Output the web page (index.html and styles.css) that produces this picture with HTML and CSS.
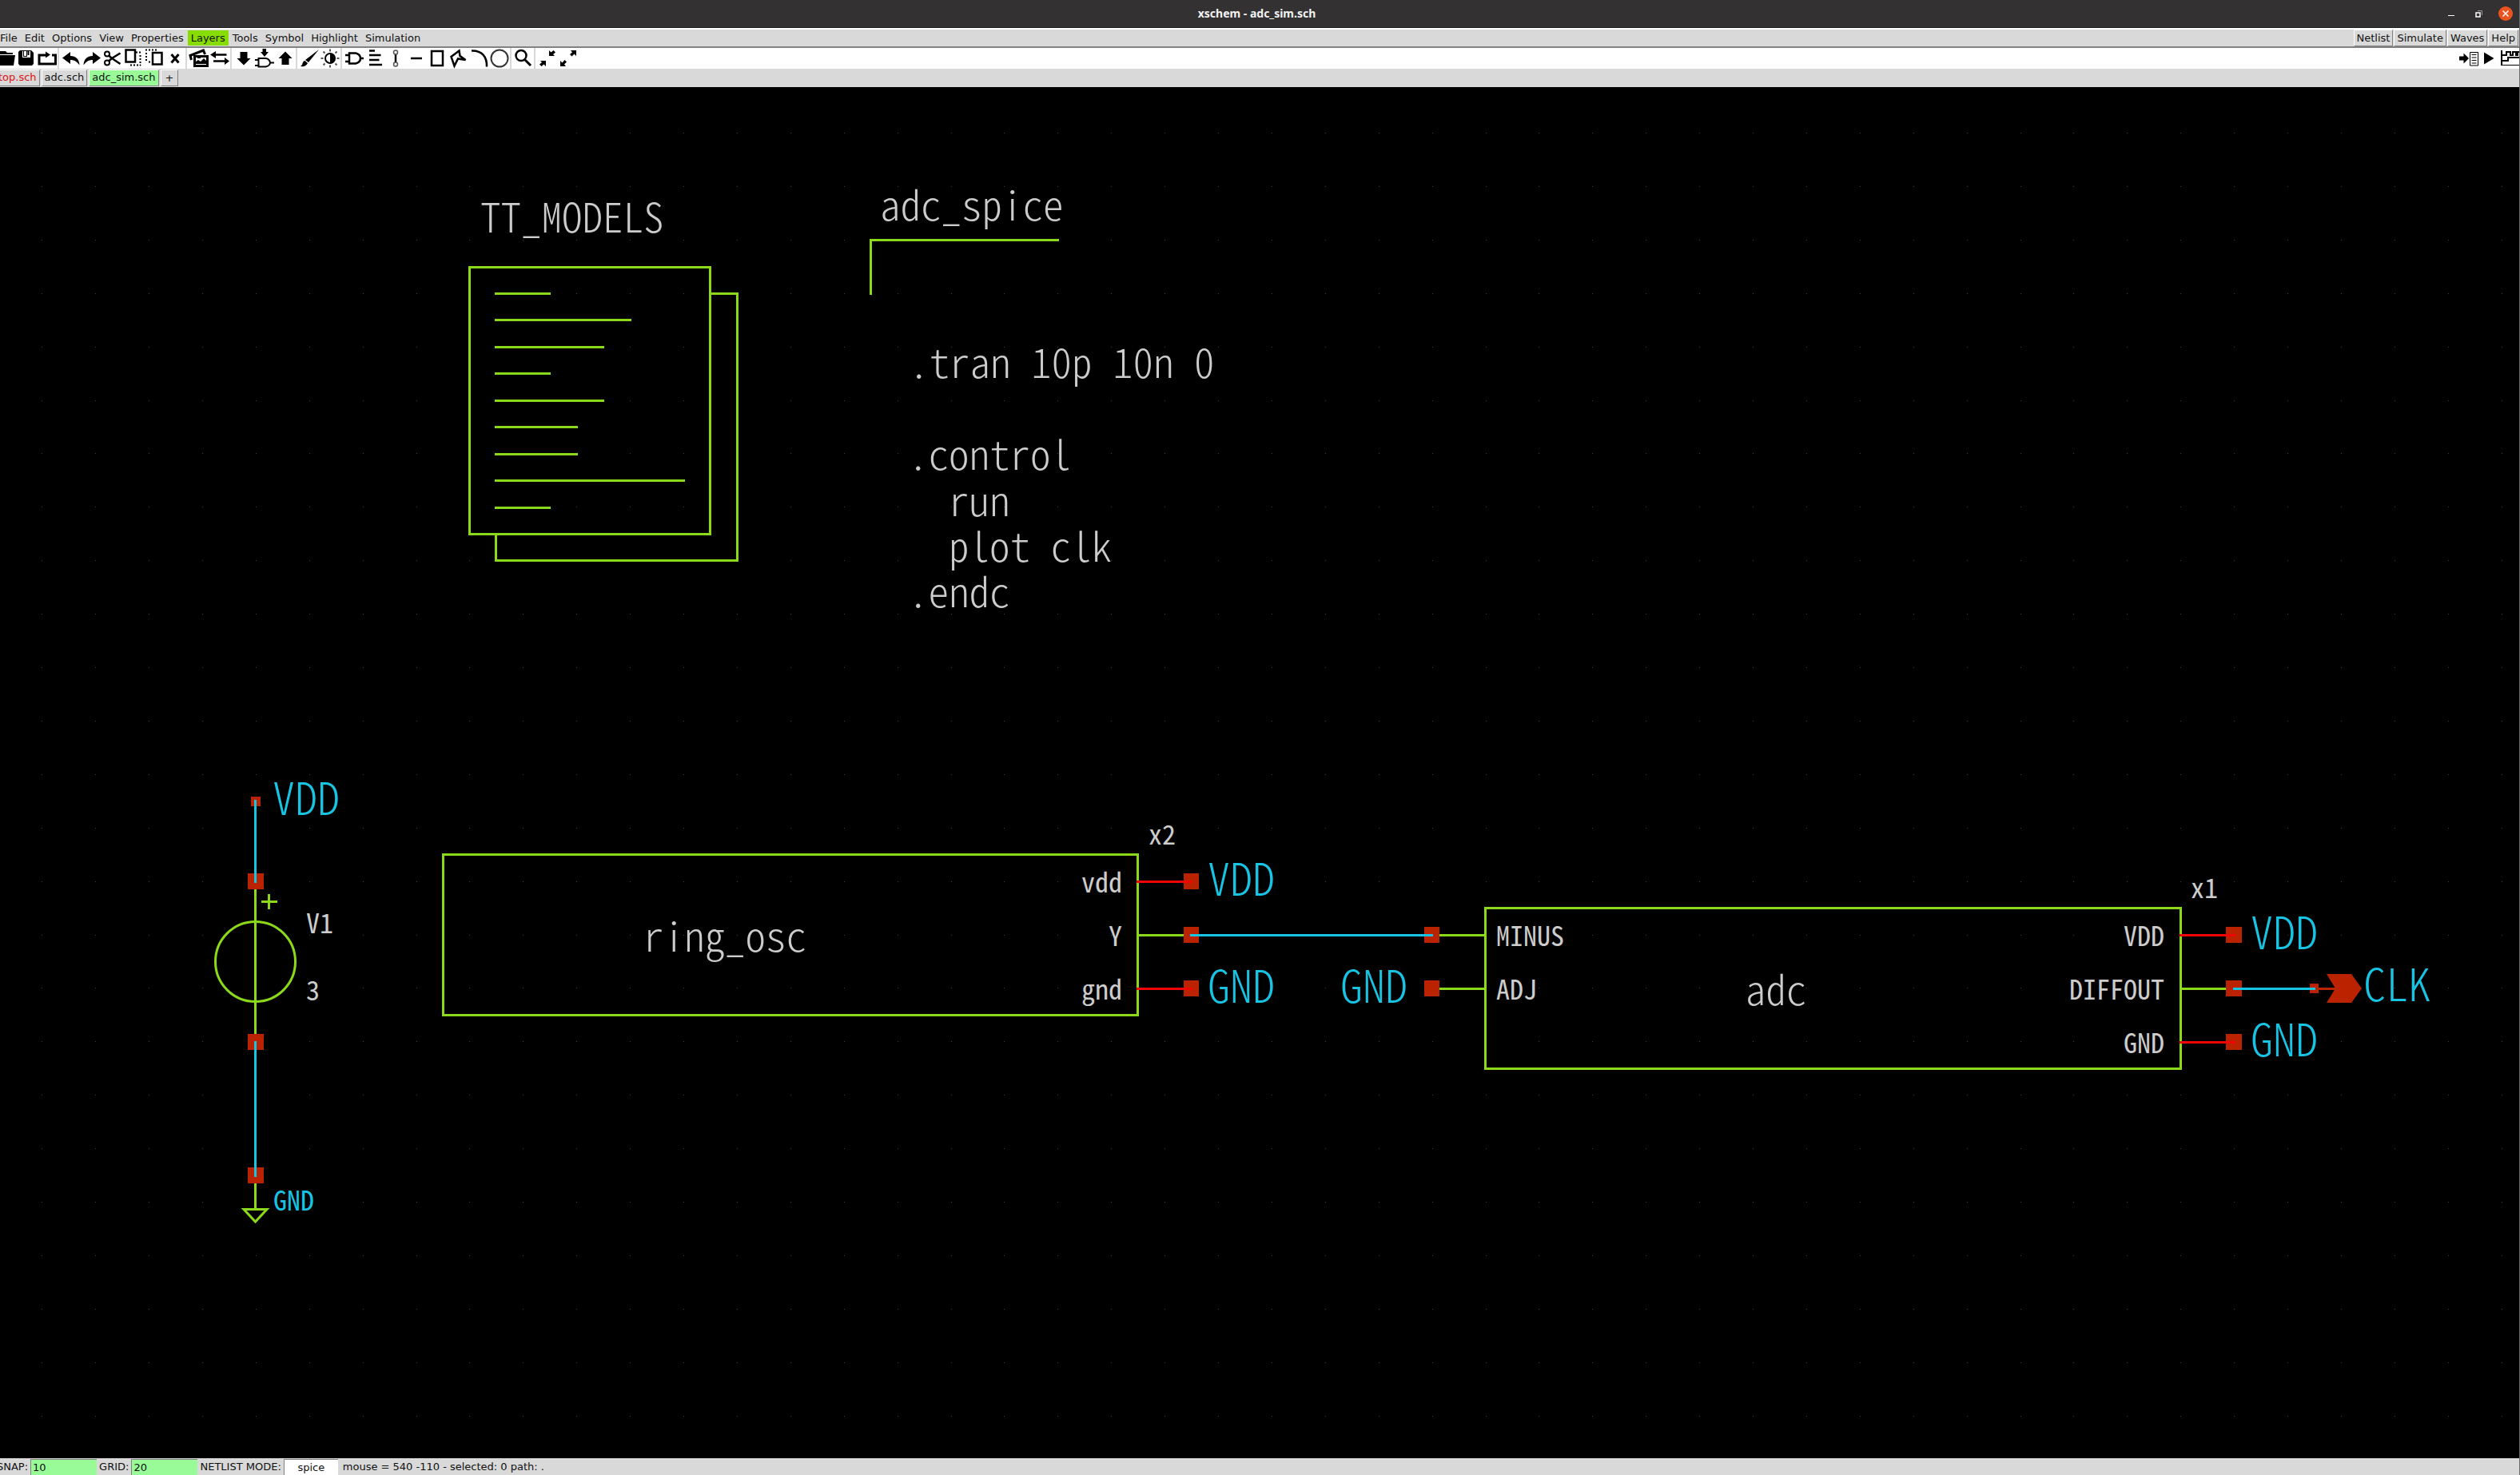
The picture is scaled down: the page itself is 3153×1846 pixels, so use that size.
FILE: index.html
```html
<!DOCTYPE html>
<html lang="en">
<head>
<meta charset="utf-8">
<title>xschem - adc_sim.sch</title>
<link rel="stylesheet" href="styles.css">
</head>
<body>
<div class="app">
  <header class="titlebar">
    <h1 class="title">xschem - adc_sim.sch</h1>
    <div class="window-buttons">
      <button class="window-button" aria-label="Minimize"><svg width="20" height="20"><path d="M6 12.500h8" stroke="#fff" fill="none"/></svg></button>
      <button class="window-button" aria-label="Restore"><svg width="20" height="20" fill="none"><path d="M9 6.500h5.500v5.500" stroke="#999"/><path d="M7 9h5v5H7z" stroke="#fff" stroke-width="1.500"/></svg></button>
      <button class="window-button close" aria-label="Close"><svg width="20" height="20"><circle cx="10" cy="10" r="9" fill="#e95420"/><path d="M6.500 6.500l7 7M13.500 6.500l-7 7" stroke="#fff" stroke-width="1.500"/></svg></button>
    </div>
  </header>

  <nav class="menubar">
    <div class="menus">
      <button class="menu">File</button>
      <button class="menu">Edit</button>
      <button class="menu">Options</button>
      <button class="menu">View</button>
      <button class="menu">Properties</button>
      <button class="menu layers">Layers</button>
      <button class="menu">Tools</button>
      <button class="menu">Symbol</button>
      <button class="menu">Highlight</button>
      <button class="menu">Simulation</button>
    </div>
    <div class="actions">
      <button class="action">Netlist</button>
      <button class="action">Simulate</button>
      <button class="action">Waves</button>
      <button class="action">Help</button>
    </div>
  </nav>

  <div class="toolbar">
    <div class="tools">
      <div class="tool-group">
        <button class="tool" aria-label="Open"><svg class="icon" viewBox="0 0 26 26"><path class="solid" d="M0 4h13l2 2h7v2H0zM2 9h23l-2 13H0z"/></svg></button>
        <button class="tool" aria-label="Save"><svg class="icon" viewBox="0 0 26 26"><path class="solid" d="M5 3h14l3 3v14l-2 2H5l-2-2V5z"/><path d="M8 4h10v8H8z" fill="#fff"/><path class="solid" d="M9 4h5v7H9zM14.500 4h2v5h-2z"/><path d="M10 4h3v6h-3z" fill="#fff"/></svg></button>
        <button class="tool" aria-label="Reload"><svg class="icon" viewBox="0 0 26 26"><path class="line heavy" d="M13 9H3v11h20.500V9H19"/><path class="solid" d="M11 4.500l6 4-6 4z"/></svg></button>
      </div>
      <div class="tool-group">
        <button class="tool" aria-label="Undo"><svg class="icon" viewBox="0 0 26 26"><path class="solid" d="M2 12.500L12 5v5c7 0 11 4 11.500 11.500C20 17 17 15 12 15v5z"/></svg></button>
        <button class="tool" aria-label="Redo"><svg class="icon" viewBox="0 0 26 26"><path class="solid" d="M24 12.500L14 5v5C7 10 3 14 2.500 21.500 6 17 9 15 14 15v5z"/></svg></button>
        <button class="tool" aria-label="Cut"><svg class="icon" viewBox="0 0 26 26"><g class="line"><circle cx="6" cy="7.500" r="3"/><circle cx="6" cy="18.500" r="3"/><path d="M8 9.500l4 3.500 10.500 7M8 16.500l4-3.500 10.500-6.500" stroke-width="2.500"/></g></svg></button>
        <button class="tool" aria-label="Copy"><svg class="icon" viewBox="0 0 26 26"><path class="line medium" d="M3.500 2.500h11.500v15H3.500z"/><path class="dotted" d="M16 5.500h6M21.500 9v13M9 21.500h13"/></svg></button>
        <button class="tool" aria-label="Paste"><svg class="icon" viewBox="0 0 26 26"><path class="dotted" d="M2 2.500h14M3 6v12M6 17.500h3"/><path class="line medium" d="M11 6h11.500v14.500H11z"/></svg></button>
        <button class="tool" aria-label="Delete"><svg class="icon" viewBox="0 0 26 26"><path class="line heavy" d="M8.500 8l9 10.500M17.500 8l-9 10.500"/></svg></button>
      </div>
      <div class="tool-group">
        <button class="tool" aria-label="Place symbol"><svg class="icon" viewBox="0 0 26 26"><path class="line heavy" d="M3.500 15L2 9.500 18.500 3l2 5"/><path class="line heavy" d="M7.500 10.500h16v12h-16z"/><path class="solid" d="M9 20v-3l3-2 3 2 4-4 4 4v3zM11 11h4v2h-4z"/></svg></button>
        <button class="tool" aria-label="Switch"><svg class="icon" viewBox="0 0 26 26"><path class="line medium" d="M6 8.500h15.500M5 16.500h15"/><path class="solid" d="M1 8.500l7-4.500v9zM25 16.500l-6-4.500v9z"/></svg></button>
      </div>
      <div class="tool-group">
        <button class="tool" aria-label="Descend"><svg class="icon" viewBox="0 0 26 26"><path class="solid" d="M8.500 5h9v8h4L13 21.500 4.500 13h4z"/></svg></button>
        <button class="tool" aria-label="Descend symbol"><svg class="icon" viewBox="0 0 26 26"><path class="solid" d="M10.500 1h4.500v4h3l-5 6-5-6h2.500z"/><path class="line" d="M1 15h4M1 22h4M5.500 13h9q5 1 5.500 5.500-.5 4-5.500 5h-9zM20 18.500h5"/></svg></button>
        <button class="tool" aria-label="Go back"><svg class="icon" viewBox="0 0 26 26"><path class="solid" d="M8.500 21h9v-8h4L13 4.500 4.500 13h4z"/></svg></button>
      </div>
      <div class="tool-group">
        <button class="tool" aria-label="Edit"><svg class="icon" viewBox="0 0 26 26"><path class="solid" d="M25 2L12 18l-4-3zM7.500 16l3.500 3q-2 5-9 4 3-2 2.500-4 1-3 3-3z"/></svg></button>
        <button class="tool" aria-label="Toggle colors"><svg class="icon" viewBox="0 0 26 26"><circle class="line" cx="13" cy="13" r="6"/><path class="solid" d="M13 6.500a6.500 6.500 0 0 1 0 13z"/><path d="M13 1.500v3M13 21.500v3M1.500 13h3M21.500 13h3M4.500 4.500l2 2M19.500 19.500l2 2M4.500 21.500l2-2M19.500 6.500l2-2" stroke="#555" stroke-width="2"/></svg></button>
      </div>
      <div class="tool-group">
        <button class="tool" aria-label="Insert symbol"><svg class="icon" viewBox="0 0 26 26"><path class="line medium" d="M2 9h5M2 17h5M7 6.500h8q6 1.500 6 6.500t-6 6.500H7zM21 13h4"/></svg></button>
        <button class="tool" aria-label="Insert text"><svg class="icon" viewBox="0 0 26 26"><path class="line medium" d="M6 3.500h7M6 9h14.500M6 15h12.500M6 21h16"/></svg></button>
        <button class="tool" aria-label="Insert wire"><svg class="icon" viewBox="0 0 26 26"><path class="line medium" d="M13 8v10"/><g fill="none" stroke="#555" stroke-width="1.500"><circle cx="13" cy="5.500" r="2.500"/><circle cx="13" cy="20.500" r="2.500"/></g></svg></button>
        <button class="tool" aria-label="Insert line"><svg class="icon" viewBox="0 0 26 26"><path class="line medium" d="M6 13h14"/></svg></button>
        <button class="tool" aria-label="Insert rectangle"><svg class="icon" viewBox="0 0 26 26"><path class="line medium" d="M6 4h14v18H6z"/></svg></button>
        <button class="tool" aria-label="Insert polygon"><svg class="icon" viewBox="0 0 26 26"><path class="line medium" d="M14.500 3.500L4.500 11l4 11.500 4.500-9 9.500 1.500-7-5z"/></svg></button>
        <button class="tool" aria-label="Insert arc"><svg class="icon" viewBox="0 0 26 26"><path class="line medium" d="M4 3.500C17 3 23.500 11 23 23.500"/></svg></button>
        <button class="tool" aria-label="Insert circle"><svg class="icon" viewBox="0 0 26 26"><circle cx="13" cy="13" r="10.500" fill="none" stroke="#333" stroke-width="2"/></svg></button>
      </div>
      <div class="tool-group">
        <button class="tool" aria-label="Zoom box"><svg class="icon" viewBox="0 0 26 26"><circle class="line medium" cx="10" cy="9.500" r="6.500"/><path class="line heavy" d="M14.500 14.500l7.500 7.500"/></svg></button>
      </div>
      <div class="tool-group">
        <button class="tool" aria-label="Zoom in"><svg class="icon" viewBox="0 0 26 26"><path class="solid" d="M4 16h7v7l-2.500-2.500L5.500 23 3 20.500 6 18zM22 10h-7V3l2.500 2.500L20.500 3 23 5.500 20 8z"/></svg></button>
        <button class="tool" aria-label="Zoom full"><svg class="icon" viewBox="0 0 26 26"><path class="solid" d="M16 3h7v7l-2.500-2.500L17.500 10.500 15 8l3-2.500zM10 23H3v-7l2.500 2.500L8.500 15 11 17.500 8 20.500z"/></svg></button>
      </div>
    </div>
    <div class="run-tools">
      <button class="tool" aria-label="Create netlist"><svg class="icon" viewBox="0 0 26 26"><path class="solid" d="M1 10.500h5.500v-4L13 13l-6.500 6.500v-4H1z"/><path class="line thin" d="M14.500 5.500h10v16.500h-10zM16.500 8.500h6M16.500 12h6M16.500 15.500h6M16.500 19h6"/></svg></button>
      <button class="tool" aria-label="Run simulation"><svg class="icon" viewBox="0 0 26 26"><path class="solid" d="M6 5.500L18.500 13 6 20.500z"/></svg></button>
      <button class="tool" aria-label="View waves"><svg class="icon" viewBox="0 0 26 26"><path class="line" d="M2 3v19M2 9h6V5h5v4h3V5h4v4h2V5h4M2 16h8v-4h16"/><path d="M1 21.500h25" stroke="#000"/></svg></button>
    </div>
  </div>

  <nav class="tabs">
    <button class="tab modified">top.sch</button>
    <button class="tab">adc.sch</button>
    <button class="tab current">adc_sim.sch</button>
    <button class="tab add">+</button>
  </nav>

  <main class="canvas">
    <svg class="schematic" viewBox="0 109 3152 1716" preserveAspectRatio="xMinYMin meet">
      <defs>
        <path id="grid-row" class="grid-dot" d="M0 .5h1m66 0h1m66 0h1m66 0h1m66 0h1m65 0h1m66 0h1m66 0h1m66 0h1m66 0h1"/>
        <pattern id="grid" x="253" y="233" width="669" height="669" patternUnits="userSpaceOnUse">
          <use href="#grid-row"/><use href="#grid-row" y="67"/><use href="#grid-row" y="134"/><use href="#grid-row" y="201"/><use href="#grid-row" y="268"/>
          <use href="#grid-row" y="334"/><use href="#grid-row" y="401"/><use href="#grid-row" y="468"/><use href="#grid-row" y="535"/><use href="#grid-row" y="602"/>
        </pattern>
      </defs>
      <rect x="0" y="109" width="100%" height="100%" fill="url(#grid)"/>

      <!-- symbol bodies -->
      <g class="body">
        <path d="M587.500 334.500h301v334h-301z"/>
        <path d="M890 367.500h32.500v334h-302v-32"/>
        <path d="M619 367.500H689M619 400.500H790M619 434.500H756M619 467.500H689M619 501.500H756M619 534.500H723M619 568.500H723M619 601.500H857M619 635.500H689"/>
        <path d="M1325 300.500H1089.500V369"/>
        <path d="M319.500 1113V1294M327 1128.500H347M336.500 1119V1138M319.500 1481V1513"/>
        <circle cx="319.500" cy="1203.500" r="50"/>
        <path d="M305 1513.500H334L319.500 1529z"/>
        <path d="M554.500 1069.500h869v201h-869z"/>
        <path d="M1858.500 1136.500h870v201h-870z"/>
        <path d="M1425 1170.500H1481M1801 1170.500H1857M1801 1237.500H1857M2730 1237.500H2785"/>
      </g>

      <!-- pins -->
      <g class="pin">
        <path d="M314 997h12v12h-12zM310 1093h20v20h-20zM310 1294h20v20h-20zM310 1461h20v20h-20z"/>
        <path d="M1481 1093h19v20h-19zM1481 1160h19v20h-19zM1481 1227h19v20h-19zM1782 1160h19v20h-19zM1782 1227h19v20h-19z"/>
        <path d="M2785 1160h20v20h-20zM2785 1227h20v20h-20zM2785 1294h20v20h-20zM2890 1231h11v12h-11z"/>
        <path d="M2901 1236h21v3h-21zM2911 1219h31l13 18-13 18h-31l11-18z"/>
      </g>
      <path class="supply" d="M1422 1103.500H1492M1422 1237.500H1492M2727 1170.500H2797M2727 1304.500H2797"/>
      <path class="wire" d="M319.500 1001V1105M319.500 1303V1473M1489 1170.500H1793M2794 1237.500H2897"/>

      <g class="label code">
        <text x="601" y="291">TT_MODELS</text>
        <text x="1101" y="276">adc_spice</text>
        <text x="1137" y="473">.tran 10p 10n 0</text>
        <text x="1136" y="588">.control</text>
        <text x="1187" y="646">run</text>
        <text x="1187" y="703">plot clk</text>
        <text x="1136" y="760">.endc</text>
        <text x="907" y="1191" text-anchor="middle">ring_osc</text>
        <text x="2222" y="1258" text-anchor="middle">adc</text>
      </g>
      <g class="label name">
        <text x="383" y="1168">V1</text>
        <text x="383" y="1252">3</text>
        <text x="1437" y="1057">x2</text>
        <text x="2741" y="1124">x1</text>
        <text x="1872" y="1184">MINUS</text>
        <text x="1872" y="1251">ADJ</text>
        <g text-anchor="end">
          <text x="1404" y="1117">vdd</text>
          <text x="1404" y="1184">Y</text>
          <text x="1404" y="1251">gnd</text>
          <text x="2708" y="1184">VDD</text>
          <text x="2708" y="1251">DIFFOUT</text>
          <text x="2708" y="1318">GND</text>
        </g>
        <text class="net" x="342" y="1515">GND</text>
      </g>
      <g class="label net big">
        <text x="341" y="1020">VDD</text>
        <text x="1511" y="1121">VDD</text>
        <text x="1511" y="1255">GND</text>
        <text x="1677" y="1255">GND</text>
        <text x="2816" y="1188">VDD</text>
        <text x="2816" y="1322">GND</text>
        <text x="2957" y="1253">CLK</text>
      </g>
    </svg>
  </main>

  <footer class="statusbar">
    <label class="field-label" for="snap">SNAP:</label>
    <input class="field" id="snap" value="10">
    <label class="field-label" for="grid-size">GRID:</label>
    <input class="field" id="grid-size" value="20">
    <label class="field-label" for="mode">NETLIST MODE:</label>
    <input class="field mode" id="mode" value="spice">
    <span class="message">mouse = 540 -110 - selected: 0 path: .</span>
  </footer>
</div>
</body>
</html>
```
FILE: styles.css
```css
* {
  box-sizing: border-box;
}

body {
  margin: 0;
  background: #000;
  font: 13px/18px "DejaVu Sans", sans-serif;
  color: #111;
}

button,
input {
  margin: 0;
  padding: 0;
  border: 0;
  border-radius: 0;
  background: none;
  color: inherit;
  font: inherit;
}

.app {
  display: flex;
  flex-direction: column;
  min-height: 100vh;
  overflow: hidden;
  border-right: 1px solid #6b6b6b;
}

/* Title bar */
.titlebar {
  display: grid;
  grid-template-columns: 1fr auto 1fr;
  align-items: center;
  height: 35px;
  padding-right: 7px;
  background: #333132;
  border-bottom: 1px solid #1c1c1c;
}

.title {
  grid-column: 2;
  margin: 0;
  color: #f2f2f2;
  font: bold 14px/20px "Noto Sans", sans-serif;
}

.window-buttons {
  display: flex;
  justify-content: flex-end;
  gap: 14px;
}

.window-button {
  width: 20px;
  height: 20px;
}

.window-button svg {
  display: block;
}

/* Menu bar */
.menubar {
  display: flex;
  justify-content: space-between;
  height: 25px;
  background: #d9d9d9;
  border-top: 2px solid #fff;
  border-bottom: 2px solid #828282;
}

.menus,
.actions {
  display: flex;
  gap: 1px;
}

.menus {
  margin-left: -4px;
  padding: 1px 0;
}

.menu {
  padding: 0 4px;
}

.menu.layers {
  background: #88dd00;
}

.actions {
  padding-right: 1px;
}

.action {
  padding: 0 3px;
  border: 1px solid #828282;
  border-color: #fff #828282 #828282 #fff;
}

/* Tool bar */
.toolbar {
  display: flex;
  justify-content: space-between;
  background: #fff;
}

.tools,
.tool-group,
.run-tools {
  display: flex;
}

.tools {
  margin-left: -6px;
}

.run-tools {
  margin-right: -2px;
}

.tool-group + .tool-group {
  padding-left: 2px;
  border-left: 2px solid #d9d9d9;
}

.tool {
  width: 26px;
  height: 26px;
}

.icon {
  display: block;
  width: 26px;
  height: 26px;
}

.solid {
  fill: #000;
}

.line {
  fill: none;
  stroke: #000;
  stroke-width: 2;
}

.medium {
  stroke-width: 2.5;
}

.heavy {
  stroke-width: 3;
}

.thin {
  stroke-width: 1;
}

.dotted {
  fill: none;
  stroke: #000;
  stroke-width: 2;
  stroke-dasharray: 2 2;
}

/* Tabs */
.tabs {
  display: flex;
  gap: 2px;
  height: 23px;
  padding: 1px 0;
  background: #d9d9d9;
}

.tab {
  padding: 0 3px 2px;
  border: 1px solid #828282;
  border-color: #fff #828282 #828282 #fff;
}

.tab.modified {
  margin-left: -6px;
  color: #dd1111;
}

.tab.current {
  background: #98fb98;
}

.tab.add {
  padding: 0 5px;
}

/* Drawing area */
.canvas {
  flex: 1;
  min-height: 0;
  background: #000;
}

.schematic {
  display: block;
  width: 100%;
  height: auto;
}

.grid-dot {
  fill: none;
  stroke: #3f3f3f;
  stroke-width: 1;
}

.body {
  fill: none;
  stroke: #8cd81a;
  stroke-width: 3;
}

.pin {
  fill: #bb2200;
}

.supply {
  fill: none;
  stroke: #f00505;
  stroke-width: 3;
}

.wire {
  fill: none;
  stroke: #18c4e4;
  stroke-width: 3;
}

.label {
  fill: #cccccc;
  font-family: "Noto Sans CJK JP", sans-serif;
  font-feature-settings: "hwid";
  font-weight: 300;
}

.code {
  font-size: 51px;
}

.name {
  font-size: 34px;
  font-weight: 400;
}

.big {
  font-size: 56px;
}

.net {
  fill: #18c4e4;
}

/* Status bar */
.statusbar {
  display: flex;
  align-items: stretch;
  gap: 3px;
  height: 21px;
  padding-top: 1px;
  background: #d9d9d9;
  line-height: 20px;
}

.field-label:first-child {
  margin-left: -4px;
}

.field {
  width: 83px;
  padding: 0 2px;
  background: #98fb98;
  border-top: 1px solid #828282;
  border-left: 1px solid #828282;
}

.field.mode {
  width: 68px;
  background: #fff;
  text-align: center;
}

.message {
  margin-left: 3px;
}
```
